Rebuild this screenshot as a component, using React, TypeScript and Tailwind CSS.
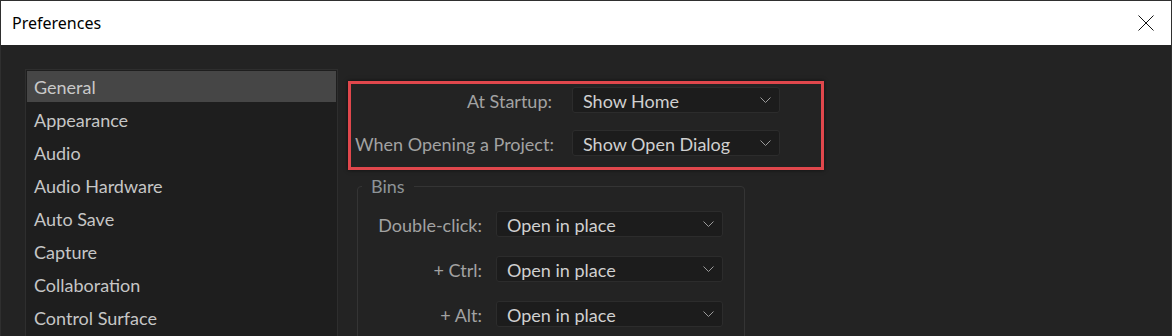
import React from "react";

const items = [
  "General",
  "Appearance",
  "Audio",
  "Audio Hardware",
  "Auto Save",
  "Capture",
  "Collaboration",
  "Control Surface",
];

function Chevron() {
  return (
    <svg width="11" height="6" viewBox="0 0 11 6" className="shrink-0">
      <path d="M0.5 0.5 L5.5 5.5 L10.5 0.5" fill="none" stroke="#9a9a9a" strokeWidth="1" />
    </svg>
  );
}

function Select({ value, w }: { value: string; w: string }) {
  return (
    <div
      className={`${w} h-[26px] flex items-center justify-between pl-[10px] pr-[8px] rounded-[3px] bg-[#1c1c1c] border border-[#2c2c2c] text-[#d0d0d0]`}
    >
      <span className="leading-none pt-[1px] whitespace-nowrap">{value}</span>
      <Chevron />
    </div>
  );
}

export default function App() {
  return (
    <div
      className="w-[1172px] h-[336px] overflow-hidden bg-[#232323] border-t border-x border-[#2f2f2f] flex flex-col"
      style={{ fontFamily: "Lato, 'Open Sans', sans-serif" }}
    >
      <div className="h-[44px] bg-white flex items-center justify-between pl-[11px] pr-[17px] shrink-0">
        <span
          className="text-[16px] text-black"
          style={{ fontFamily: "'Noto Sans', 'Open Sans', sans-serif" }}
        >
          Preferences
        </span>
        <svg width="16" height="16" viewBox="0 0 16 16">
          <path d="M0.5 0.5 L15.5 15.5 M15.5 0.5 L0.5 15.5" stroke="#111" strokeWidth="1" />
        </svg>
      </div>
      <div className="flex flex-1 pt-[24px] pl-[24px] text-[18px]">
        <div className="w-[313px] bg-[#1e1e1e] border border-[#2e2e2e] self-stretch pb-4">
          {items.map((it, i) => (
            <div key={it} className="h-[33px] p-[1px]">
              <div
                className={`h-full flex items-center pl-[7px] pt-[2px] whitespace-nowrap ${
                  i === 0 ? "bg-[#464646] text-[#c9c9c9]" : "text-[#c6c6c6]"
                }`}
              >
                {it}
              </div>
            </div>
          ))}
        </div>
        <div className="ml-[10px] pt-[12px] flex flex-col">
          <div className="w-[476px] border-[3px] border-[#e0474c] pt-[3px] pb-[11px] pl-[4px] flex flex-col gap-[17px] shadow-[0_0_4px_rgba(0,0,0,0.6)]">
            <div className="flex items-center">
              <div className="w-[197px] text-right text-[#a2a2a2] leading-none pt-[2px] whitespace-nowrap">At Startup:</div>
              <div className="ml-[20px]">
                <Select value="Show Home" w="w-[208px]" />
              </div>
            </div>
            <div className="flex items-center">
              <div className="w-[197px] text-right text-[#a2a2a2] leading-none pt-[2px] whitespace-nowrap">When Opening a Project:</div>
              <div className="ml-[20px]">
                <Select value="Show Open Dialog" w="w-[208px]" />
              </div>
            </div>
          </div>
          <fieldset className="ml-[9px] mt-[3px] w-[388px] border border-[#343434] rounded-[4px] pt-[11px] pb-[20px] flex flex-col gap-[19px]">
            <legend className="ml-[4px] px-[9px] text-[#8d9397]">Bins</legend>
            {[
              ["Double-click:", "Open in place"],
              ["+ Ctrl:", "Open in place"],
              ["+ Alt:", "Open in place"],
            ].map(([l, v]) => (
              <div key={l} className="flex items-center">
                <div className="w-[124px] text-right text-[#a2a2a2] leading-none pt-[2px] whitespace-nowrap">{l}</div>
                <div className="ml-[14px]">
                  <Select value={v} w="w-[227px]" />
                </div>
              </div>
            ))}
          </fieldset>
        </div>
      </div>
    </div>
  );
}
